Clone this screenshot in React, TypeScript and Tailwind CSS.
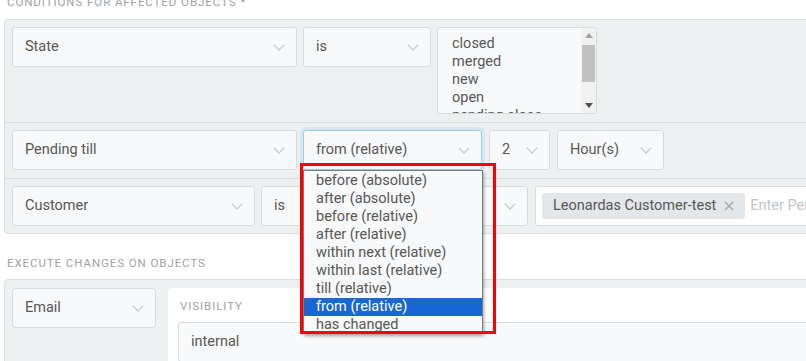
import React from "react";

const txt = "text-[#575755]";

function Chevron() {
  return (
    <svg width="12" height="7" viewBox="0 0 12 7" className="shrink-0">
      <polyline points="0.8,0.8 6,6 11.2,0.8" fill="none" stroke="#c8cdd0" strokeWidth="1.3" />
    </svg>
  );
}

function Select({ label, w, focused }: { label: string; w: string; focused?: boolean }) {
  return (
    <div
      className={`${w} h-[40px] shrink-0 rounded-[3px] border bg-[#f8f9fa] flex items-center justify-between pl-[12px] pr-[11px] ${
        focused
          ? "border-[#9ccaf0] shadow-[0_0_0_3px_rgba(90,170,235,0.14)]"
          : "border-[#d5dbde]"
      }`}
    >
      <span className={`${txt} text-[14.5px] whitespace-nowrap overflow-hidden`}>{label}</span>
      <Chevron />
    </div>
  );
}

function MultiSelect() {
  const items = ["closed", "merged", "new", "open", "pending close", "pending reminder"];
  return (
    <div className="w-[160px] h-[87px] shrink-0 rounded-[3px] border border-[#d5dbde] bg-[#f8f9fa] flex overflow-hidden">
      <div className="flex-1 pl-[14px] pt-[7px] overflow-hidden">
        {items.map((i) => (
          <div key={i} className={`${txt} h-[18px] leading-[18px] text-[14.5px] whitespace-nowrap`}>
            {i}
          </div>
        ))}
      </div>
      <div className="w-[15px] h-full bg-[#f1f1f1] flex flex-col">
        <div className="h-[15px] flex items-center justify-center">
          <svg width="8" height="5" viewBox="0 0 8 5">
            <polygon points="0,5 8,5 4,0" fill="#a3a3a3" />
          </svg>
        </div>
        <div className="mt-[2px] mx-[1px] h-[37px] bg-[#c1c1c1]" />
        <div className="flex-1" />
        <div className="h-[15px] flex items-center justify-center">
          <svg width="8" height="5" viewBox="0 0 8 5">
            <polygon points="0,0 8,0 4,5" fill="#505050" />
          </svg>
        </div>
      </div>
    </div>
  );
}

export default function App() {
  const options = [
    "before (absolute)",
    "after (absolute)",
    "before (relative)",
    "after (relative)",
    "within next (relative)",
    "within last (relative)",
    "till (relative)",
    "from (relative)",
    "has changed",
  ];
  return (
    <div className="relative w-[806px] h-[361px] overflow-hidden bg-white font-['Roboto','Liberation_Sans',sans-serif]">
      <div className="-mt-[6px] pl-[7px] h-[16px] leading-[16px] text-[11.5px] tracking-[0.08em] uppercase text-[#9ea2a4] whitespace-nowrap">
        Conditions for affected objects *
      </div>

      <div className="mt-[9px] ml-[4px] w-[830px] rounded-[4px] border border-[#d8dee1] bg-[#edf0f1]">
        <div className="flex gap-[6px] px-[7px] pt-[7px] pb-[8px] border-b border-[#d8dee1]">
          <Select label="State" w="w-[285px]" />
          <Select label="is" w="w-[128px]" />
          <MultiSelect />
        </div>
        <div className="flex gap-[6px] px-[7px] pt-[7px] pb-[8px] border-b border-[#d8dee1]">
          <Select label="Pending till" w="w-[285px]" />
          <div className="flex gap-[7px]">
            <Select label="from (relative)" w="w-[179px]" focused />
            <Select label="2" w="w-[61px]" />
            <Select label="Hour(s)" w="w-[107px]" />
          </div>
        </div>
        <div className="flex gap-[6px] px-[7px] pt-[7px] pb-[7px]">
          <Select label="Customer" w="w-[243px]" />
          <Select label="is" w="w-[130px]" />
          <Select label="" w="w-[131px]" />
          <div className="ml-[1px] flex-1 h-[40px] rounded-[3px] border border-[#d5dbde] bg-white flex items-center pl-[6px]">
            <div className="h-[26px] rounded-[3px] bg-[#e3e7e9] flex items-center pl-[11px] pr-[11px] gap-[8px]">
              <span className={`${txt} text-[14.5px] whitespace-nowrap`}>Leonardas Customer-test</span>
              <svg width="10" height="10" viewBox="0 0 10 10">
                <path d="M1 1 L9 9 M9 1 L1 9" stroke="#a0a6a9" strokeWidth="1.4" />
              </svg>
            </div>
            <span className="ml-[5px] text-[14.5px] text-[#c0c5c8] whitespace-nowrap">Enter Person</span>
          </div>
        </div>
      </div>

      <div className="mt-[21px] pl-[7px] h-[16px] leading-[16px] text-[11.5px] tracking-[0.08em] uppercase text-[#9ea2a4] whitespace-nowrap">
        Execute changes on objects
      </div>

      <div className="mt-[8px] ml-[4px] w-[830px] h-[120px] rounded-[4px] border border-[#d8dee1] bg-[#edf0f1] flex gap-[12px] px-[7px] pt-[8px]">
        <Select label="Email" w="w-[144px]" />
        <div className="flex-1 bg-white rounded-[4px] px-[10px] pt-[10px]">
          <div className="ml-[2px] h-[16px] leading-[16px] text-[11.5px] tracking-[0.08em] uppercase text-[#9ea2a4]">
            Visibility
          </div>
          <div className="mt-[8px] h-[40px] rounded-[3px] border border-[#d5dbde] bg-[#f8f9fa] flex items-center pl-[12px]">
            <span className={`${txt} text-[14.5px]`}>internal</span>
          </div>
        </div>
      </div>

      <div className="absolute left-[303px] top-[170px] w-[180px] h-[164px] border border-[#7a7a7a] bg-[#f8f9fa] overflow-hidden pt-[1px] shadow-[1px_2px_3px_rgba(0,0,0,0.35)]">
        {options.map((o) => (
          <div
            key={o}
            className={`h-[18px] leading-[18px] pl-[12px] text-[14.5px] whitespace-nowrap ${
              o === "from (relative)" ? "bg-[#1967d2] text-white" : txt
            }`}
          >
            {o}
          </div>
        ))}
      </div>

      <div className="absolute left-[300px] top-[163px] w-[196px] h-[171px] border-[3px] border-[#ff0000]" />
    </div>
  );
}
